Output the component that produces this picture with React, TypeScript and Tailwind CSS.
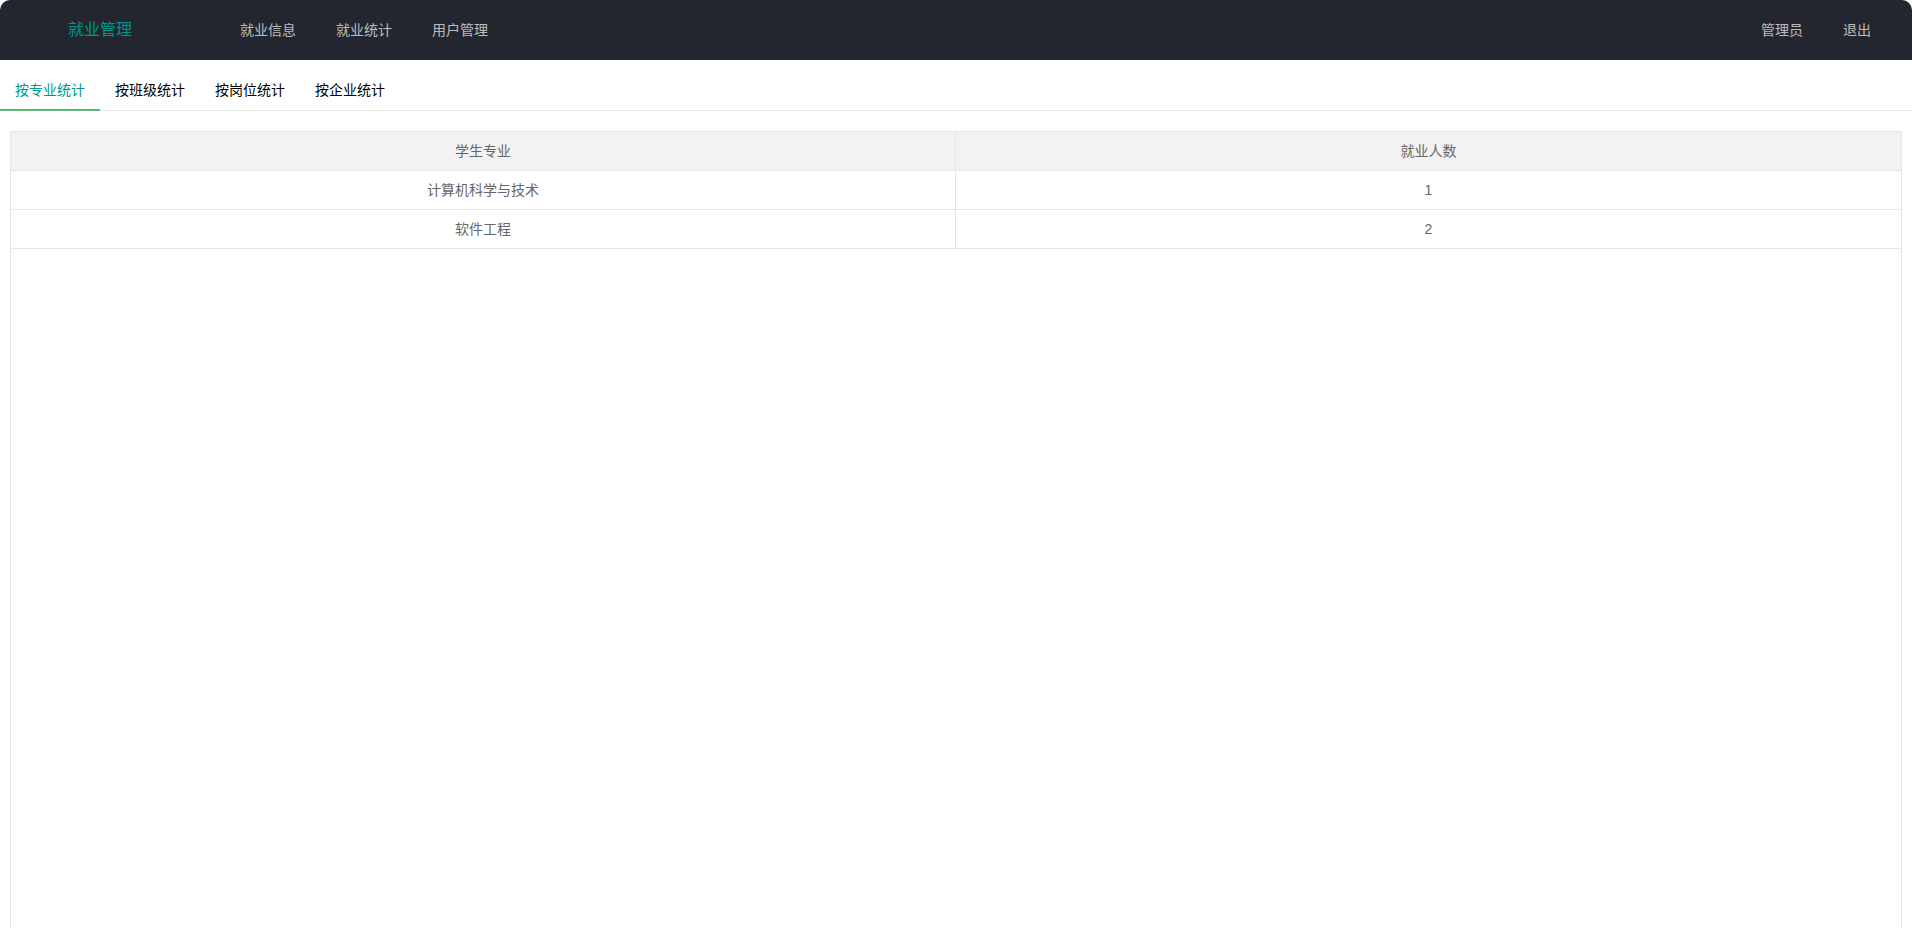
import { useState } from 'react';

const font = '"Liberation Sans","Noto Sans CJK SC",sans-serif';

const navLeft = ['就业信息', '就业统计', '用户管理'];
const navRight = ['管理员', '退出'];
const tabs = ['按专业统计', '按班级统计', '按岗位统计', '按企业统计'];

const rows = [
  { major: '计算机科学与技术', count: 1 },
  { major: '软件工程', count: 2 },
];

export default function App() {
  const [active, setActive] = useState(0);

  return (
    <div className="h-screen flex flex-col bg-white overflow-hidden" style={{ fontFamily: font }}>
      {/* header */}
      <div className="h-[60px] shrink-0 flex items-center bg-[#23262E] rounded-t-[10px]">
        <div className="w-[200px] text-center text-[16px] text-[#009688]">就业管理</div>
        <ul className="flex ml-[20px]">
          {navLeft.map((item) => (
            <li key={item} className="px-[20px] leading-[60px] text-[14px] text-white/70 cursor-pointer">
              {item}
            </li>
          ))}
        </ul>
        <ul className="flex ml-auto mr-[21px]">
          {navRight.map((item) => (
            <li key={item} className="px-[20px] leading-[60px] text-[14px] text-white/70 cursor-pointer">
              {item}
            </li>
          ))}
        </ul>
      </div>

      {/* tabs */}
      <ul className="mt-[10px] h-[41px] shrink-0 flex border-b border-[#e6e6e6]">
        {tabs.map((t, i) => (
          <li
            key={t}
            onClick={() => setActive(i)}
            className={
              i === active
                ? 'px-[15px] h-[41px] leading-[40px] text-[14px] text-[#009688] border-b-2 border-[#5FB878] cursor-pointer'
                : 'px-[15px] h-[41px] leading-[40px] text-[14px] text-black cursor-pointer'
            }
          >
            {t}
          </li>
        ))}
      </ul>

      {/* table */}
      <div className="flex-1 flex flex-col px-[10px] pt-[20px]">
        <div className="flex-1 border border-b-0 border-[#e6e6e6] text-[14px] text-[#666]">
          <div className="grid grid-cols-2 bg-[#f2f2f2] border-b border-[#e6e6e6]">
            <div className="py-[9px] leading-[20px] text-center border-r border-[#e6e6e6]">学生专业</div>
            <div className="py-[9px] leading-[20px] text-center">就业人数</div>
          </div>
          {rows.map((r) => (
            <div key={r.major} className="grid grid-cols-2 border-b border-[#e6e6e6]">
              <div className="py-[9px] leading-[20px] text-center border-r border-[#e6e6e6]">{r.major}</div>
              <div className="py-[9px] leading-[20px] text-center">{r.count}</div>
            </div>
          ))}
        </div>
      </div>
    </div>
  );
}
